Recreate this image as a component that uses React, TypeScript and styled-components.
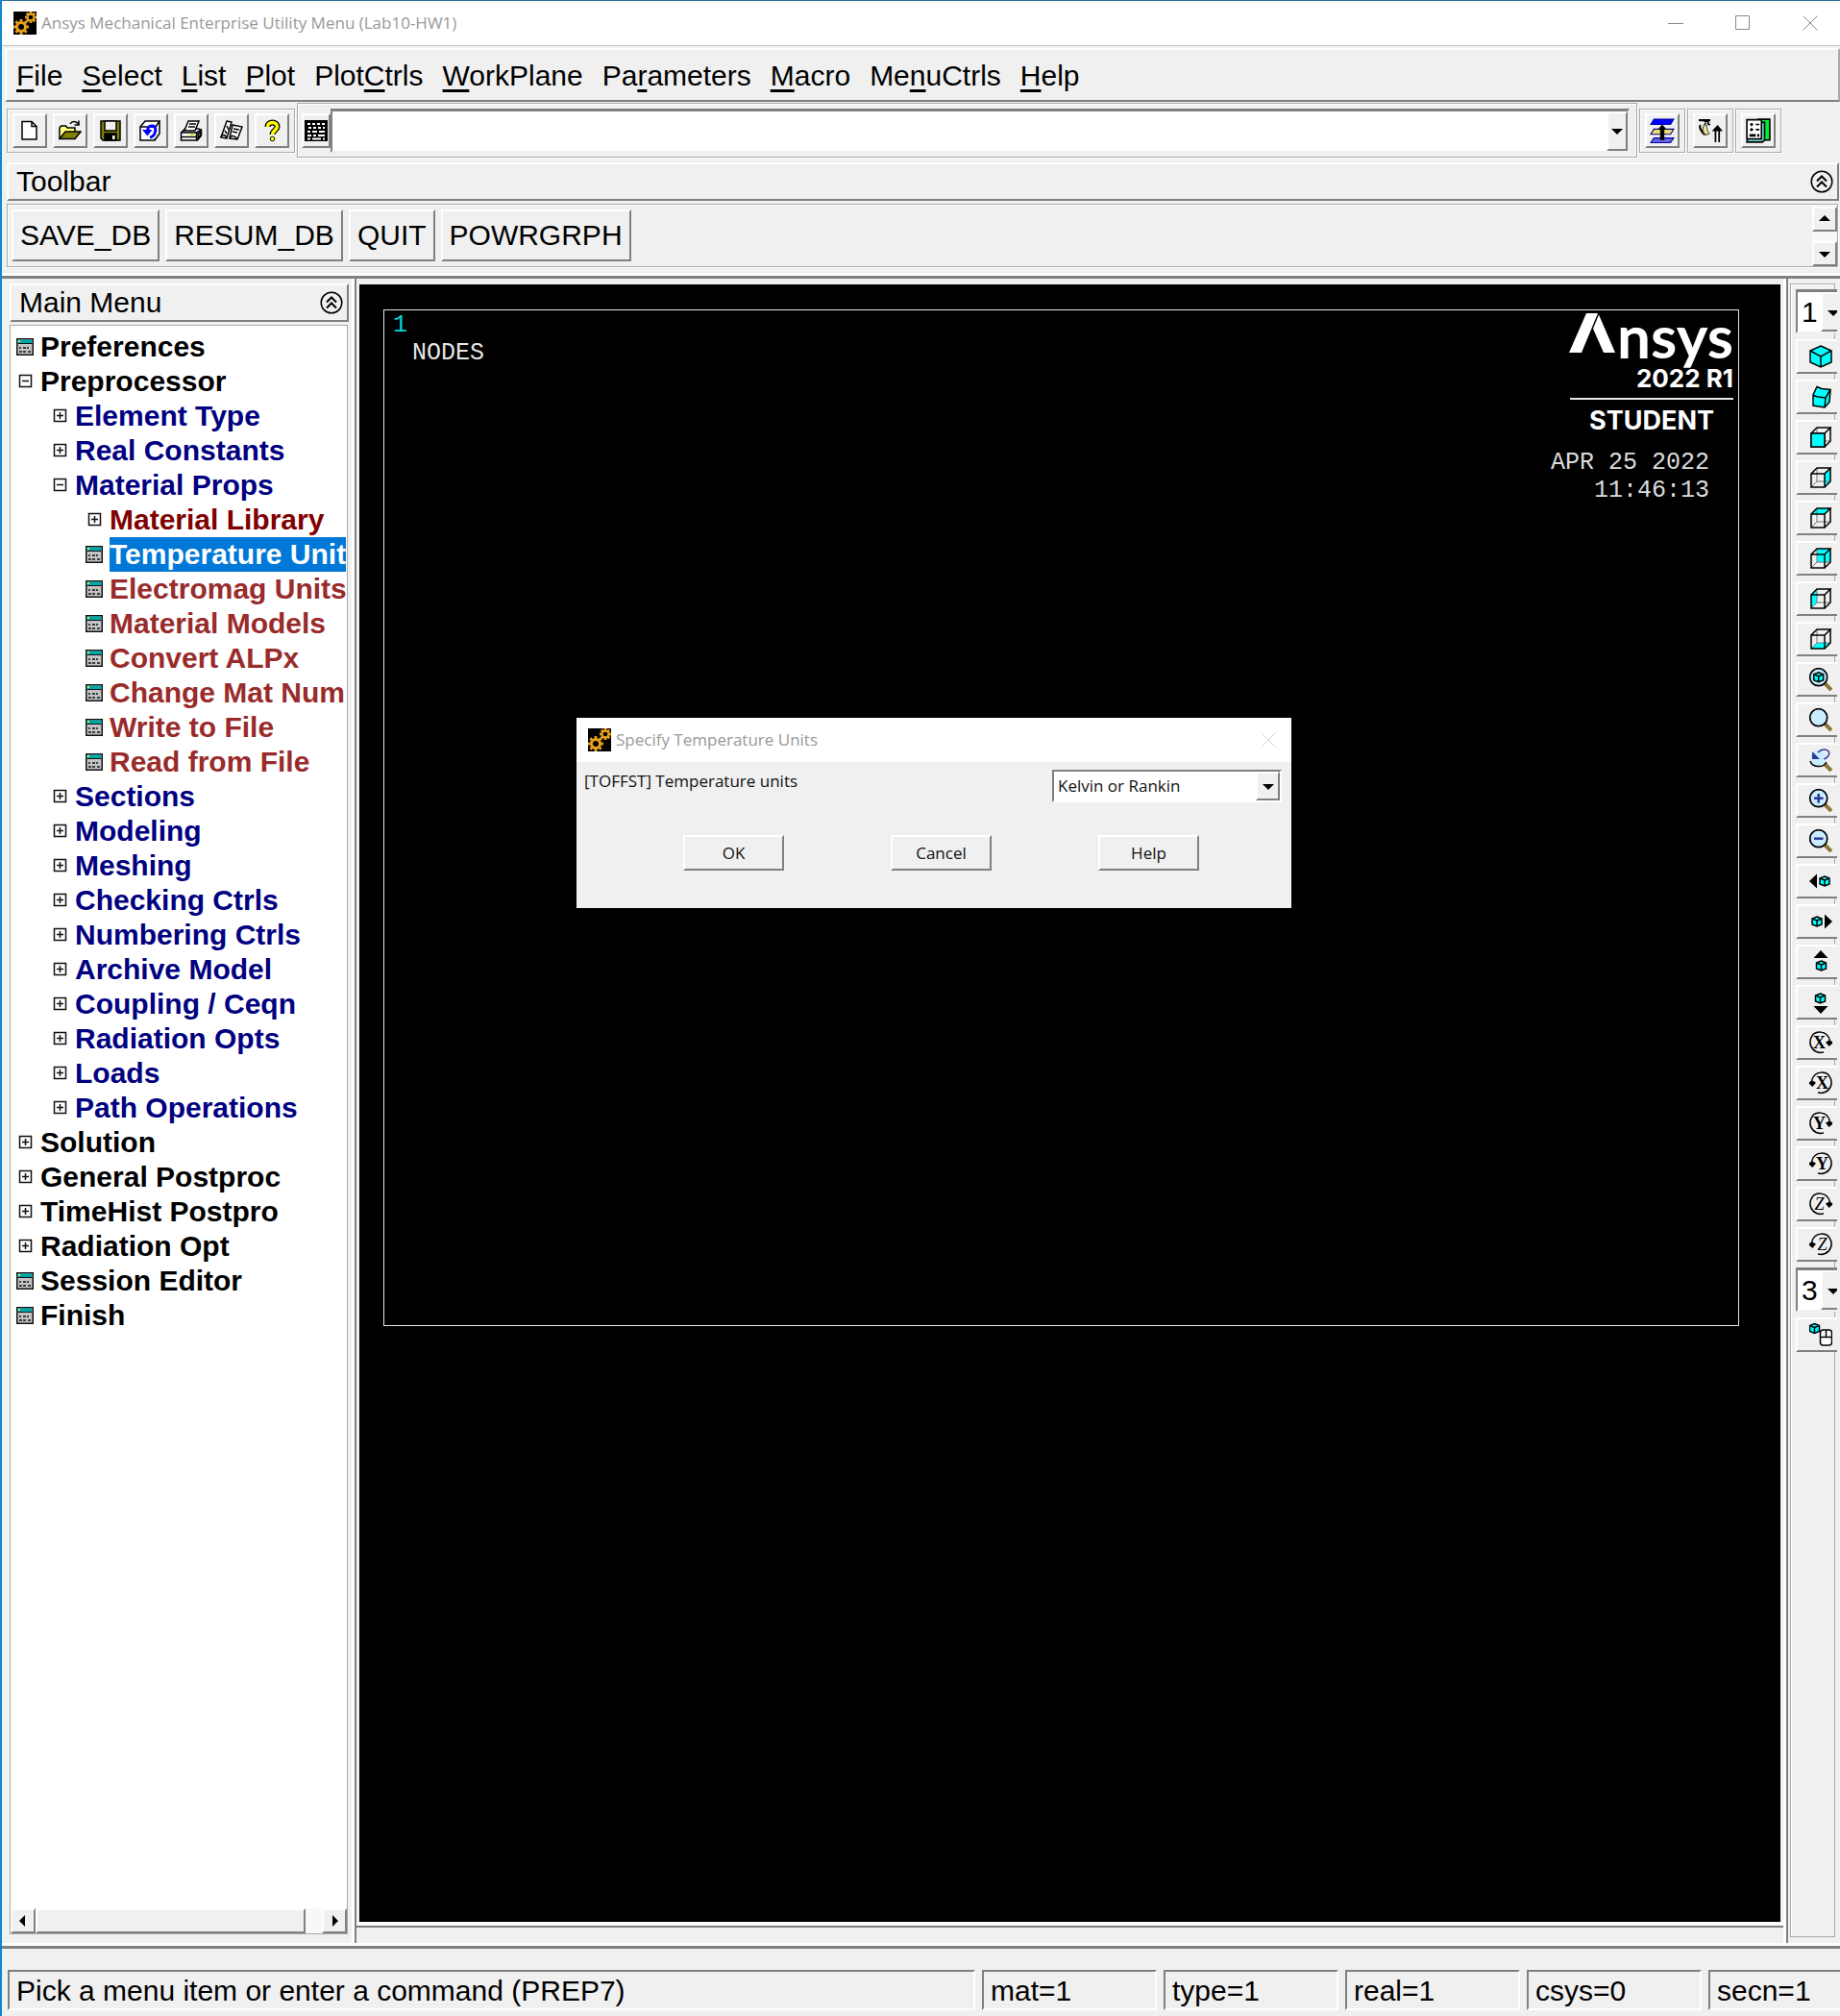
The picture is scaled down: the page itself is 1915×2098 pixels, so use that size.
import React, { useState } from "react";
import styled, { createGlobalStyle, css } from "styled-components";

const face = "#f0f0f0";
const shade = "#808080";
const line = "#a9a9a9";
const cyan = "#00ffff";

const raised = css`
  border: 2px solid;
  border-color: #ffffff ${shade} ${shade} #ffffff;
  background: ${face};
`;

const sunken = css`
  border: 2px solid;
  border-color: ${shade} #ffffff #ffffff ${shade};
`;

const etched = css`
  border: 1px solid ${line};
  box-shadow: inset 1px 1px #ffffff, 1px 1px #ffffff;
`;

const Global = createGlobalStyle`
  *, *::before, *::after { box-sizing: border-box; }
  body {
    margin: 0;
    background: ${face};
    color: #000;
    font-family: "Liberation Sans", Arial, sans-serif;
    font-size: 30px;
    line-height: 36px;
  }
  button, input, select { font: inherit; color: inherit; margin: 0; border-radius: 0; }
  svg { display: block; flex: none; }
`;

/* ---------- window ---------- */

const Window = styled.div`
  display: flex;
  flex-direction: column;
  min-height: 100vh;
  border-left: 2px solid #0f86d0;
  background: ${face};
  white-space: nowrap;
`;

const TitleBar = styled.header`
  display: flex;
  align-items: center;
  height: 48px;
  padding-left: 12px;
  gap: 5px;
  border-top: 1px solid #2b6b99;
  border-bottom: 1px solid #c3c3c3;
  background: #fff;
`;

const Caption = styled.h1`
  flex: 1;
  margin: 0;
  font: 400 17px/24px "Open Sans", "Noto Sans", sans-serif;
  color: #999;
`;

const CaptionButtons = styled.div`
  display: flex;
  gap: 8px;
`;

const CaptionButton = styled.button`
  display: flex;
  align-items: center;
  justify-content: center;
  width: 62px;
  height: 44px;
  padding: 0;
  border: 0;
  background: none;
`;

const MenuBar = styled.nav`
  display: flex;
  align-items: center;
  gap: 20px;
  height: 56px;
  margin: 2px 0 1px 3px;
  padding: 1px 0 0 10px;
  border: 2px solid;
  border-color: #fff ${line} ${shade} #fff;
`;

const MenuItem = styled.button`
  padding: 0;
  border: 0;
  background: none;

  u {
    text-decoration-thickness: 3px;
    text-underline-offset: 4px;
    text-decoration-skip-ink: none;
  }
`;

/* ---------- top tool rows ---------- */

const ToolRow = styled.div`
  display: flex;
  align-items: center;
  gap: 2px;
  height: 57px;
  padding-left: 5px;
  padding-right: 61px;
`;

const ToolGroup = styled.div`
  ${etched}
  display: flex;
  align-items: center;
  gap: 6px;
  height: 46px;
  padding: 0 5px;
`;

const IconButton = styled.button`
  ${raised}
  display: flex;
  align-items: center;
  justify-content: center;
  flex: none;
  width: 36px;
  height: 36px;
  padding: 0;
`;

const CommandGroup = styled.form`
  ${etched}
  display: flex;
  align-items: center;
  flex: 1;
  height: 57px;
  padding: 0 7px 0 4px;
`;

const KeyboardButton = styled(IconButton)`
  width: 30px;
`;

const CommandBox = styled.div`
  ${sunken}
  display: flex;
  flex: 1;
  height: 46px;
  border-top-width: 3px;
  border-color: ${shade} ${face} ${face} ${shade};
  background: #fff;
`;

const CommandInput = styled.input`
  flex: 1;
  min-width: 0;
  padding: 0 6px;
  border: 0;
  outline: 0;
  background: transparent;
`;

const DropButton = styled.button`
  ${raised}
  display: flex;
  align-items: center;
  justify-content: center;
  width: 22px;
  padding: 0;
`;

const PanelHeader = styled.div`
  ${raised}
  display: flex;
  align-items: center;
  justify-content: space-between;
  height: 40px;
  padding: 0 4px 0 8px;
`;

const PanelTitle = styled.h2`
  margin: 0;
  font: inherit;
`;

const RoundButton = styled.button`
  padding: 0;
  border: 0;
  background: none;
`;

const ToolbarSection = styled.section`
  margin: 5px 1px 6px 5px;
`;

const AbbreviationRow = styled.div`
  ${etched}
  display: flex;
  justify-content: space-between;
  height: 66px;
  margin-top: 3px;
  margin-right: 1px;
  padding-left: 4px;
`;

const Abbreviations = styled.div`
  display: flex;
  align-items: center;
  gap: 6px;
`;

const AbbreviationButton = styled.button`
  ${raised}
  height: 54px;
  padding: 0 7px;
`;

const VerticalScroll = styled.div`
  display: flex;
  flex-direction: column;
  justify-content: space-between;
  width: 26px;
  margin: 2px 0 0;
  background: #f8f8f8;
`;

const ScrollButton = styled.button`
  ${raised}
  display: flex;
  align-items: center;
  justify-content: center;
  width: 26px;
  height: 26px;
  padding: 0;
`;

const Ridge = styled.div`
  height: 6px;
  border-top: 3px solid #fff;
  border-bottom: 3px solid ${shade};
`;

/* ---------- body ---------- */

const Body = styled.main`
  display: flex;
  flex: 1;
`;

const Sidebar = styled.aside`
  display: flex;
  flex-direction: column;
  flex: none;
  width: 364px;
  padding: 5px 3px 9px 8px;
`;

const TreePanel = styled.div`
  display: flex;
  flex-direction: column;
  flex: 1;
  margin: 3px 1px 0 0;
  border: 1px solid ${line};
  background: #fff;
`;

const Tree = styled.ul`
  flex: 1;
  margin: 0;
  padding: 4px 1px 0 0;
  list-style: none;
`;

const TreeRow = styled.button<{ $level: number }>`
  display: flex;
  align-items: center;
  gap: 7px;
  width: 100%;
  height: 36px;
  padding: 0 0 0 ${(p) => 6 + p.$level * 36}px;
  border: 0;
  background: none;
  overflow: hidden;
`;

const tones = { root: "#000000", menu: "#000080", library: "#800000", action: "#992b2b" };
type Tone = keyof typeof tones;

const TreeLabel = styled.span<{ $tone: Tone; $selected: boolean }>`
  flex: none;
  font-weight: 700;
  color: ${(p) => (p.$selected ? "#fff" : tones[p.$tone])};
  background: ${(p) => (p.$selected ? "#0078d7" : "none")};
`;

const HorizontalScroll = styled.div`
  display: flex;
  background: #f8f8f8;
`;

const Thumb = styled.div`
  ${raised}
  flex: 1;
  margin-right: 17px;
`;

const Splitter = styled.div`
  flex: none;
  width: 5px;
  border-left: 3px solid #fff;
  border-right: 2px solid ${shade};
`;

const GraphicsPane = styled.section`
  display: flex;
  flex-direction: column;
  flex: 1;
  min-width: 0;
  padding: 6px 0 16px 3px;
`;

const Canvas = styled.div`
  position: relative;
  flex: 1;
  margin-right: 3px;
  padding: 26px 43px 0 25px;
  background: #000;
  color: #e6e6e6;
`;

const PaneRidge = styled.div`
  height: 5px;
  margin: 1px 0 0 -3px;
  border-top: 2px solid #fff;
  border-bottom: 2px solid ${shade};
`;

const PlotFrame = styled.div`
  display: flex;
  justify-content: space-between;
  aspect-ratio: 4 / 3;
  border: 1px solid #e6e6e6;
  font: 25px/29px "Liberation Mono", "Courier New", monospace;
`;

const PlotInfo = styled.div`
  padding: 1px 0 0 9px;
`;

const WindowNumber = styled.div`
  color: #00d8d8;
`;

const PlotType = styled.div`
  padding-left: 20px;
`;

const Legend = styled.div`
  display: flex;
  flex-direction: column;
  align-items: flex-end;
  padding-right: 5px;
  color: #fff;
`;

const Wordmark = styled.div`
  display: flex;
  height: 55px;
  font: 700 62px/52px Lato, "Open Sans", sans-serif;
`;

const LogoLine = styled.div`
  font: 700 26px/32px Inter, "Open Sans", sans-serif;
`;

const Edition = styled(LogoLine)`
  width: 170px;
  margin-top: 4px;
  padding-top: 6px;
  padding-right: 20px;
  border-top: 2px solid #e6e6e6;
  font-size: 27px;
  text-align: right;
`;

const Stamp = styled.div`
  margin-top: 13px;
  padding-right: 25px;
  color: #dcdcdc;
  text-align: right;
`;

/* ---------- dialog ---------- */

const Dialog = styled.section`
  position: absolute;
  left: 226px;
  top: 451px;
  width: 744px;
  background: ${face};
  color: #111;
  font: 17px/24px "Open Sans", "Noto Sans", sans-serif;
`;

const DialogTitle = styled.header`
  display: flex;
  align-items: center;
  gap: 5px;
  height: 46px;
  padding: 0 16px 0 12px;
  background: #fff;
  color: #999;
`;

const DialogHeading = styled.h2`
  flex: 1;
  margin: 0;
  font: inherit;
`;

const DialogField = styled.div`
  display: flex;
  justify-content: space-between;
  padding: 8px 10px 0 8px;
`;

const FieldLabel = styled.label`
  height: 24px;
`;

const SelectBox = styled.div`
  ${sunken}
  display: flex;
  width: 239px;
  height: 34px;
  background: #fff;
`;

const Select = styled.select`
  flex: 1;
  min-width: 0;
  padding: 0 4px;
  border: 0;
  outline: 0;
  appearance: none;
  background: transparent;
`;

const DropMark = styled.span`
  ${raised}
  display: flex;
  align-items: center;
  justify-content: center;
  flex: none;
  width: 25px;
  pointer-events: none;
`;

const DialogActions = styled.div`
  display: flex;
  gap: 111px;
  padding: 34px 96px 39px 111px;
`;

const DialogButton = styled.button`
  ${raised}
  flex: 1;
  height: 37px;
  padding: 0;
`;

/* ---------- view controls ---------- */

const ViewStrip = styled.aside`
  flex: none;
  width: 51px;
  margin-right: 3px;
  padding: 5px 0 6px 2px;
  overflow: hidden;
`;

const ViewFrame = styled.div`
  display: flex;
  flex-direction: column;
  gap: 6px;
  width: 47px;
  height: 100%;
  padding: 5px 0 0 5px;
  border: 1px solid ${line};
  box-shadow: inset 1px 1px #fff;
`;

const ViewButton = styled.button`
  ${raised}
  display: flex;
  align-items: center;
  justify-content: center;
  flex: none;
  width: 52px;
  height: 36px;
  padding: 0;
`;

const ViewSelectBox = styled(SelectBox)`
  width: 52px;
  height: 46px;
  border-top-width: 3px;
  border-bottom-color: ${face};
`;

const ViewSelect = styled(Select)`
  flex: none;
  width: 24px;
`;

/* ---------- status ---------- */

const StatusBar = styled.footer`
  display: flex;
  gap: 7px;
  padding: 22px 0 6px 6px;
  overflow: hidden;
`;

const StatusCell = styled.div<{ $grow?: boolean }>`
  ${sunken}
  flex: ${(p) => (p.$grow ? "1 1 0" : "none")};
  min-width: ${(p) => (p.$grow ? "0" : "182px")};
  height: 42px;
  padding: 2px 6px 0 7px;

  &:last-child {
    min-width: 137px;
    border-right: 0;
  }
`;

/* ---------- icons ---------- */

const Svg = ({ size = 24, children }: { size?: number; children: React.ReactNode }) => (
  <svg width={size} height={size} viewBox="0 0 24 24" fill="none" stroke="#000" strokeWidth="1.5" aria-hidden="true">
    {children}
  </svg>
);

const Arrow = ({ dir }: { dir: "up" | "down" | "left" | "right" }) => {
  const d = { up: "M0 8L6 2l6 6z", down: "M0 4h12l-6 6z", left: "M8 0v12L2 6z", right: "M4 0l6 6-6 6z" }[dir];
  return (
    <svg width="12" height="12" viewBox="0 0 12 12" aria-hidden="true">
      <path d={d} />
    </svg>
  );
};

const Gears = () => {
  const teeth = (cx: number, cy: number, r: number) =>
    [0, 45, 90, 135].map((a) => (
      <path key={a} d={`M${cx} ${cy - r}V${cy + r}`} transform={`rotate(${a} ${cx} ${cy})`} strokeWidth="2.8" />
    ));
  return (
    <svg width="24" height="24" viewBox="0 0 24 24" fill="#000" stroke="#e5a11c" aria-hidden="true">
      <rect width="24" height="24" stroke="none" />
      {teeth(8, 16, 8)}
      <circle cx="8" cy="16" r="4.5" strokeWidth="3" />
      {teeth(18, 6, 6)}
      <circle cx="18" cy="6" r="3.3" strokeWidth="2" />
    </svg>
  );
};

const Collapse = () => (
  <Svg>
    <circle cx="12" cy="12" r="10.8" />
    <path d="M7 11.5l5-5 5 5M7 17.5l5-5 5 5" strokeWidth="2" />
  </Svg>
);

const CloseMark = ({ color, size = 16 }: { color: string; size?: number }) => (
  <svg width={size} height={size} viewBox="0 0 16 16" stroke={color} aria-hidden="true">
    <path d="M.5.5l15 15M15.5.5l-15 15" />
  </svg>
);

const NewIcon = () => (
  <Svg>
    <path d="M4 2.500h10l5 5v13.500H4z" fill="#fff" />
    <path d="M14 2.500v5h5" />
  </Svg>
);

const OpenIcon = () => (
  <Svg>
    <path d="M1 20.500V9l1.500-2h5L9 9h8v4" fill="#ffff80" />
    <path d="M1 20.500L7 13h16l-6 7.500z" fill="#808000" />
    <path d="M12 5c2-3.500 6-3.500 8.500 0M21 1.500V6h-4.500" />
  </Svg>
);

const SaveIcon = () => (
  <Svg>
    <path d="M2 2h20v20H4l-2-2z" fill="#808000" />
    <path d="M6 2h12v10H6z" fill="#f0f0f0" />
    <path d="M6 15h12v7H6z" fill="#000" />
    <path d="M14 17h2.500v4H14z" fill="#fff" stroke="none" />
  </Svg>
);

const RestoreIcon = () => (
  <Svg>
    <path d="M1 8l5-6h15v13l-5 7H1z" fill="#fff" />
    <path d="M1 8h14M17 8l4-6M16 20v2" />
    <path d="M11 19c6-1 8-11 3-12-3-.5-5 1-5.500 5" stroke="#0000ff" strokeWidth="3" />
    <path d="M3 11h10.500L8.500 17.500z" fill="#0000ff" stroke="none" />
  </Svg>
);

const PrintIcon = () => (
  <Svg>
    <path d="M1.500 14l4-4h14l3 1v6l-4 5h-17z" fill="#fff" />
    <path d="M5 12L9 2h11l-4 10z" fill="#fff" />
    <path d="M10 5h7M9 8h7M1.500 14h16v8M17.500 14l5-3M2 18.500h15" />
    <path d="M11 16.500h4" stroke="#e5e000" strokeWidth="2" />
    <path d="M19 15l3-2v4l-3 3z" fill="#555" />
  </Svg>
);

const ReportIcon = () => (
  <Svg>
    <path d="M7 2l5 1-5 17-6-1z" fill="#fff" />
    <path d="M13 6l10 2-5 13-8-1z" fill="#fff" />
    <path d="M1 19c1-4 5-3 6 1M10 20c1-4 6-3 8 1M14 10l6 1M13 13l5 1M7 7l2 4M5 12l2 3" />
  </Svg>
);

const HelpIcon = () => (
  <Svg>
    <path d="M7.500 8c0-6 10-6 10 0 0 3-5 4-5 8" strokeWidth="6" />
    <path d="M7.500 8c0-6 10-6 10 0 0 3-5 4-5 8" stroke="#ffff00" strokeWidth="3.500" />
    <circle cx="12.500" cy="20.500" r="2.300" fill="#ffff00" strokeWidth="1" />
  </Svg>
);

const KeyboardIcon = () => (
  <Svg>
    <path d="M0 1h24v22H0z" fill="#000" stroke="none" />
    <path
      d="M3 5h3M8 5h3M13 5h3M18 5h3M4 9h3M9 9h3M14 9h3M19 9h2M3 13h3M8 13h5M15 13h6M3 17h4M9 17h3M14 17h7M3 20.500h3M8 20.500h9M19 20.500h2"
      stroke="#fff"
      strokeWidth="2.200"
    />
  </Svg>
);

const RaiseIcon = () => (
  <Svg size={26}>
    <path d="M4 1h19l-3 5H1z" fill="#0000ff" stroke="#0000aa" strokeWidth="1" />
    <path d="M4 10.500h19l-3 5H1z" fill="#e8e070" stroke="#000080" strokeWidth="1" />
    <path d="M4 19h19l-3 4.500H1z" fill="#6666dd" stroke="#0000aa" strokeWidth="1" />
    <path d="M10 21V10.500H8L12 6l4 4.500h-2V21z" fill="#000" stroke="none" />
  </Svg>
);

const ContactIcon = () => (
  <Svg size={26}>
    <path d="M1 2h11M3 7c-2 0-1 5 4 9" strokeWidth="2" />
    <path d="M6 3h4v3h2M8 4l-2 3" />
    <path d="M7 6c3 0 0 4 4 9l-3 1c-4-2-4-8-1-10z" fill="#f0e890" stroke="#554" strokeWidth="1" />
    <path d="M17 23V10M20.500 23V10" strokeWidth="1.600" />
    <path d="M13.500 12.500L19 6.500l5 6z" fill="#000" stroke="none" />
  </Svg>
);

const HiddenDialogIcon = () => (
  <Svg size={26}>
    <path d="M12 1h11v20H12z" fill="#00ee33" />
    <path d="M5 4h13v17l-2 2H1z" fill="#77dddd" />
    <path d="M1 1.500h14V20H1z" fill="#fff" />
    <path d="M4 6h3M9.500 6H13M4 11h3M9.500 11H13M5.500 4.500v3M5.500 9.500v3" />
    <path d="M3.500 16.500h6M11 16.500h2" strokeWidth="2.500" />
  </Svg>
);

type Face = "front" | "right" | "top" | "back" | "left" | "bottom";
const faces: Record<Face, string> = {
  front: "M2 8h14v14H2z",
  right: "M16 8l6-6v14l-6 6z",
  top: "M2 8l6-6h14l-6 6z",
  back: "M8 2h14v14H8z",
  left: "M2 8l6-6v14l-6 6z",
  bottom: "M2 22l6-6h14l-6 6z",
};

const CubeIcon = ({ side }: { side: Face }) => (
  <Svg>
    <path d={faces[side]} fill={cyan} stroke="none" />
    <path d="M8 2v14h14M8 16l-6 6" stroke="#777" strokeWidth="1" />
    <path d="M2 8h14v14H2zM2 8l6-6h14l-6 6M22 2v14l-6 6" />
    {side === "front" && <path d={faces.front} fill={cyan} />}
  </Svg>
);

const IsoIcon = () => (
  <Svg>
    <path d="M12 1l11 5v12l-11 5-11-5V6z" fill={cyan} />
    <path d="M1 6l11 6 11-6M12 12v11" />
  </Svg>
);

const ObliqueIcon = () => (
  <Svg>
    <path d="M8 1.500l5 2 9 1-1 13-5 5.500-12-2V10z" fill={cyan} />
    <path d="M4 10.500l5 1.500 8 1 5-8.500M17 13l-1 10" />
  </Svg>
);

const MiniCube = ({ x, y }: { x: number; y: number }) => (
  <g transform={`translate(${x} ${y})`}>
    <path d="M0-5l5 2v6l-5 2-5-2v-6z" fill={cyan} />
    <path d="M-4-2.500l4 1.500 4-1.500M0-1v6" />
  </g>
);

const Lens = ({ children }: { children?: React.ReactNode }) => (
  <Svg>
    <path d="M16 16l7 7" stroke="#8b7636" strokeWidth="4" />
    <circle cx="9.700" cy="9.700" r="9" fill="#c9ecff" strokeWidth="1.700" />
    {children}
  </Svg>
);

const ZoomBackIcon = () => (
  <Svg>
    <path d="M16 16l7 7" stroke="#8b7636" strokeWidth="4" />
    <circle cx="9.700" cy="10.500" r="8.500" fill="#c9ecff" stroke="none" />
    <path d="M1 13c2 6.500 13 8 17 1" />
    <path d="M9 4c5-5 13-3 11.500 2-.5 3-3 4-5 5" stroke="#2f3699" />
    <path d="M3 3v8h8z" fill="#2f3699" stroke="none" />
  </Svg>
);

const RotateIcon = ({ axis, back }: { axis: "X" | "Y" | "Z"; back?: boolean }) => (
  <Svg>
    <g transform={back ? "translate(24 0) scale(-1 1)" : undefined}>
      <path d="M21.500 10C19-1 5-2 1.500 8-1 17 6 24 15 22" />
      <path d="M17 11.500l4-2 3 1.500v2l-3.500 3z" fill="#000" stroke="none" />
    </g>
    <text
      x={back ? 13.5 : 10.5}
      y="18"
      textAnchor="middle"
      fill="#000"
      stroke="none"
      fontFamily="Liberation Serif, serif"
      fontSize="18"
      fontWeight={axis === "Z" ? 400 : 700}
      fontStyle={axis === "Z" ? "italic" : "normal"}
    >
      {axis}
    </text>
  </Svg>
);

const MouseIcon = () => (
  <Svg>
    <MiniCube x={5.5} y={5.5} />
    <rect x="11.500" y="7" width="12" height="16" rx="3" fill="#fff" />
    <path d="M11.500 14.500h12M17.500 7v7.500" />
  </Svg>
);

const LeafIcon = () => (
  <svg width="18" height="18" viewBox="0 0 18 18" aria-hidden="true">
    <path d="M.750.750h16.500v16.500H.750z" fill="#c4c4c4" stroke="#111" strokeWidth="1.500" />
    <path d="M1.500 1.500h15V5h-15z" fill="#00a8a8" />
    <path d="M2 3h2" stroke="#ffff66" strokeWidth="1.500" />
    <path d="M1.500 5.500h15" stroke="#111" />
    <path d="M3 10h2M7 10h3M11 10h2M3 14h3M7 14h3M12 14h3" stroke="#111" strokeWidth="1.500" />
  </svg>
);

const FoldIcon = ({ open }: { open: boolean }) => (
  <svg width="18" height="18" viewBox="0 0 18 18" fill="none" stroke="#111" strokeWidth="1.500" aria-hidden="true">
    <path d="M3.500 2.500h12v12h-12z" />
    <path d={open ? "M6 8.500h7" : "M6 8.500h7M9.500 5v7"} />
  </svg>
);

const AnsysSlashes = () => (
  <svg width="50" height="44" viewBox="0 0 50 44" fill="#fff" aria-hidden="true">
    <path d="M18 3h12L13 44H0z" />
    <path d="M31 4.500L48 44H36L25 19z" />
  </svg>
);

/* ---------- data ---------- */

const menus: [string, string, string][] = [
  ["", "F", "ile"],
  ["", "S", "elect"],
  ["", "L", "ist"],
  ["", "P", "lot"],
  ["Plot", "C", "trls"],
  ["", "W", "orkPlane"],
  ["Pa", "r", "ameters"],
  ["", "M", "acro"],
  ["Me", "n", "uCtrls"],
  ["", "H", "elp"],
];

const fileTools: [string, React.ReactNode][] = [
  ["New analysis", <NewIcon />],
  ["Open file", <OpenIcon />],
  ["Save database", <SaveIcon />],
  ["Restore database", <RestoreIcon />],
  ["Print", <PrintIcon />],
  ["Report generator", <ReportIcon />],
  ["Help", <HelpIcon />],
];

const sideTools: [string, React.ReactNode][] = [
  ["Raise hidden windows", <RaiseIcon />],
  ["Reset picking", <ContactIcon />],
  ["Contact manager", <HiddenDialogIcon />],
];

type Kind = "leaf" | "open" | "closed";
const tree: [number, Kind, Tone, string][] = [
  [0, "leaf", "root", "Preferences"],
  [0, "open", "root", "Preprocessor"],
  [1, "closed", "menu", "Element Type"],
  [1, "closed", "menu", "Real Constants"],
  [1, "open", "menu", "Material Props"],
  [2, "closed", "library", "Material Library"],
  [2, "leaf", "action", "Temperature Units"],
  [2, "leaf", "action", "Electromag Units"],
  [2, "leaf", "action", "Material Models"],
  [2, "leaf", "action", "Convert ALPx"],
  [2, "leaf", "action", "Change Mat Num"],
  [2, "leaf", "action", "Write to File"],
  [2, "leaf", "action", "Read from File"],
  [1, "closed", "menu", "Sections"],
  [1, "closed", "menu", "Modeling"],
  [1, "closed", "menu", "Meshing"],
  [1, "closed", "menu", "Checking Ctrls"],
  [1, "closed", "menu", "Numbering Ctrls"],
  [1, "closed", "menu", "Archive Model"],
  [1, "closed", "menu", "Coupling / Ceqn"],
  [1, "closed", "menu", "Radiation Opts"],
  [1, "closed", "menu", "Loads"],
  [1, "closed", "menu", "Path Operations"],
  [0, "closed", "root", "Solution"],
  [0, "closed", "root", "General Postproc"],
  [0, "closed", "root", "TimeHist Postpro"],
  [0, "closed", "root", "Radiation Opt"],
  [0, "leaf", "root", "Session Editor"],
  [0, "leaf", "root", "Finish"],
];

const viewTools: [string, React.ReactNode][] = [
  ["Isometric view", <IsoIcon />],
  ["Oblique view", <ObliqueIcon />],
  ["Front view", <CubeIcon side="front" />],
  ["Right view", <CubeIcon side="right" />],
  ["Top view", <CubeIcon side="top" />],
  ["Back view", <CubeIcon side="back" />],
  ["Left view", <CubeIcon side="left" />],
  ["Bottom view", <CubeIcon side="bottom" />],
  ["Fit view", <Lens><MiniCube x={9.7} y={9.7} /></Lens>],
  ["Zoom model", <Lens />],
  ["Back up zoom", <ZoomBackIcon />],
  ["Zoom in", <Lens><path d="M5 9.700h9.500M9.700 5v9.500" stroke="#2f3699" strokeWidth="2.500" /></Lens>],
  ["Zoom out", <Lens><path d="M5 9.700h9.500" stroke="#2f3699" strokeWidth="2.500" /></Lens>],
  ["Pan left", <Svg><path d="M8 4.500v15L0 12z" fill="#000" stroke="none" /><MiniCube x={16} y={12} /></Svg>],
  ["Pan right", <Svg><path d="M16 4.500v15l8-7.500z" fill="#000" stroke="none" /><MiniCube x={8} y={12} /></Svg>],
  ["Pan up", <Svg><path d="M4.500 8h15L12 0z" fill="#000" stroke="none" /><MiniCube x={12.5} y={16} /></Svg>],
  ["Pan down", <Svg><path d="M4.500 16h15L12 24z" fill="#000" stroke="none" /><MiniCube x={11.5} y={8} /></Svg>],
  ["Rotate +X", <RotateIcon axis="X" />],
  ["Rotate -X", <RotateIcon axis="X" back />],
  ["Rotate +Y", <RotateIcon axis="Y" />],
  ["Rotate -Y", <RotateIcon axis="Y" back />],
  ["Rotate +Z", <RotateIcon axis="Z" />],
  ["Rotate -Z", <RotateIcon axis="Z" back />],
];

const ViewPicker = ({ label, initial }: { label: string; initial: string }) => (
  <ViewSelectBox>
    <ViewSelect aria-label={label} defaultValue={initial}>
      {["1", "2", "3", "4", "5"].map((n) => (
        <option key={n}>{n}</option>
      ))}
    </ViewSelect>
    <DropMark><Arrow dir="down" /></DropMark>
  </ViewSelectBox>
);

export default function App() {
  const [selected, setSelected] = useState("Temperature Units");

  return (
    <>
      <Global />
      <Window>
        <TitleBar>
          <Gears />
          <Caption>Ansys Mechanical Enterprise Utility Menu (Lab10-HW1)</Caption>
          <CaptionButtons>
            <CaptionButton aria-label="Minimize">
              <svg width="16" height="16" stroke="#888"><path d="M0 8.500h16" /></svg>
            </CaptionButton>
            <CaptionButton aria-label="Maximize">
              <svg width="16" height="16" fill="none" stroke="#888"><path d="M.5.5h14v14H.5z" /></svg>
            </CaptionButton>
            <CaptionButton aria-label="Close"><CloseMark color="#888" /></CaptionButton>
          </CaptionButtons>
        </TitleBar>

        <MenuBar>
          {menus.map(([before, key, after]) => (
            <MenuItem key={before + key + after}>{before}<u>{key}</u>{after}</MenuItem>
          ))}
        </MenuBar>

        <ToolRow>
          <ToolGroup>
            {fileTools.map(([label, icon]) => (
              <IconButton key={label} aria-label={label}>{icon}</IconButton>
            ))}
          </ToolGroup>
          <CommandGroup onSubmit={(e) => e.preventDefault()}>
            <KeyboardButton type="button" aria-label="Command window"><KeyboardIcon /></KeyboardButton>
            <CommandBox>
              <CommandInput aria-label="Command" />
              <DropButton type="button" aria-label="Command history"><Arrow dir="down" /></DropButton>
            </CommandBox>
          </CommandGroup>
          {sideTools.map(([label, icon]) => (
            <ToolGroup key={label}>
              <IconButton aria-label={label}>{icon}</IconButton>
            </ToolGroup>
          ))}
        </ToolRow>

        <ToolbarSection>
          <PanelHeader>
            <PanelTitle>Toolbar</PanelTitle>
            <RoundButton aria-label="Collapse toolbar"><Collapse /></RoundButton>
          </PanelHeader>
          <AbbreviationRow>
            <Abbreviations>
              {["SAVE_DB", "RESUM_DB", "QUIT", "POWRGRPH"].map((name) => (
                <AbbreviationButton key={name}>{name}</AbbreviationButton>
              ))}
            </Abbreviations>
            <VerticalScroll>
              <ScrollButton aria-label="Scroll up"><Arrow dir="up" /></ScrollButton>
              <ScrollButton aria-label="Scroll down"><Arrow dir="down" /></ScrollButton>
            </VerticalScroll>
          </AbbreviationRow>
        </ToolbarSection>
        <Ridge />

        <Body>
          <Sidebar>
            <PanelHeader>
              <PanelTitle>Main Menu</PanelTitle>
              <RoundButton aria-label="Collapse main menu"><Collapse /></RoundButton>
            </PanelHeader>
            <TreePanel>
              <Tree>
                {tree.map(([level, kind, tone, label]) => (
                  <li key={label}>
                    <TreeRow $level={level} onClick={() => setSelected(label)}>
                      {kind === "leaf" ? <LeafIcon /> : <FoldIcon open={kind === "open"} />}
                      <TreeLabel $tone={tone} $selected={selected === label}>{label}</TreeLabel>
                    </TreeRow>
                  </li>
                ))}
              </Tree>
              <HorizontalScroll>
                <ScrollButton aria-label="Scroll left"><Arrow dir="left" /></ScrollButton>
                <Thumb />
                <ScrollButton aria-label="Scroll right"><Arrow dir="right" /></ScrollButton>
              </HorizontalScroll>
            </TreePanel>
          </Sidebar>
          <Splitter />

          <GraphicsPane>
            <Canvas>
              <PlotFrame>
                <PlotInfo>
                  <WindowNumber>1</WindowNumber>
                  <PlotType>NODES</PlotType>
                </PlotInfo>
                <Legend>
                  <Wordmark>
                    <AnsysSlashes />
                    nsys
                  </Wordmark>
                  <LogoLine>2022 R1</LogoLine>
                  <Edition>STUDENT</Edition>
                  <Stamp>
                    APR 25 2022
                    <br />
                    11:46:13
                  </Stamp>
                </Legend>
              </PlotFrame>

              <Dialog role="dialog" aria-labelledby="units-title">
                <DialogTitle>
                  <Gears />
                  <DialogHeading id="units-title">Specify Temperature Units</DialogHeading>
                  <RoundButton aria-label="Close dialog"><CloseMark color="#d0d0d0" /></RoundButton>
                </DialogTitle>
                <DialogField>
                  <FieldLabel htmlFor="units">[TOFFST] Temperature units</FieldLabel>
                  <SelectBox>
                    <Select id="units" defaultValue="Kelvin or Rankin">
                      <option>Kelvin or Rankin</option>
                      <option>Celsius</option>
                      <option>Fahrenheit</option>
                    </Select>
                    <DropMark><Arrow dir="down" /></DropMark>
                  </SelectBox>
                </DialogField>
                <DialogActions>
                  <DialogButton>OK</DialogButton>
                  <DialogButton>Cancel</DialogButton>
                  <DialogButton>Help</DialogButton>
                </DialogActions>
              </Dialog>
            </Canvas>
            <PaneRidge />
          </GraphicsPane>
          <Splitter />

          <ViewStrip>
            <ViewFrame>
              <ViewPicker label="Active window" initial="1" />
              {viewTools.map(([label, icon]) => (
                <ViewButton key={label} aria-label={label}>{icon}</ViewButton>
              ))}
              <ViewPicker label="Rate" initial="3" />
              <ViewButton aria-label="Dynamic model mode"><MouseIcon /></ViewButton>
            </ViewFrame>
          </ViewStrip>
        </Body>
        <Ridge />

        <StatusBar>
          <StatusCell $grow>Pick a menu item or enter a command (PREP7)</StatusCell>
          {["mat=1", "type=1", "real=1", "csys=0", "secn=1"].map((cell) => (
            <StatusCell key={cell}>{cell}</StatusCell>
          ))}
        </StatusBar>
      </Window>
    </>
  );
}
